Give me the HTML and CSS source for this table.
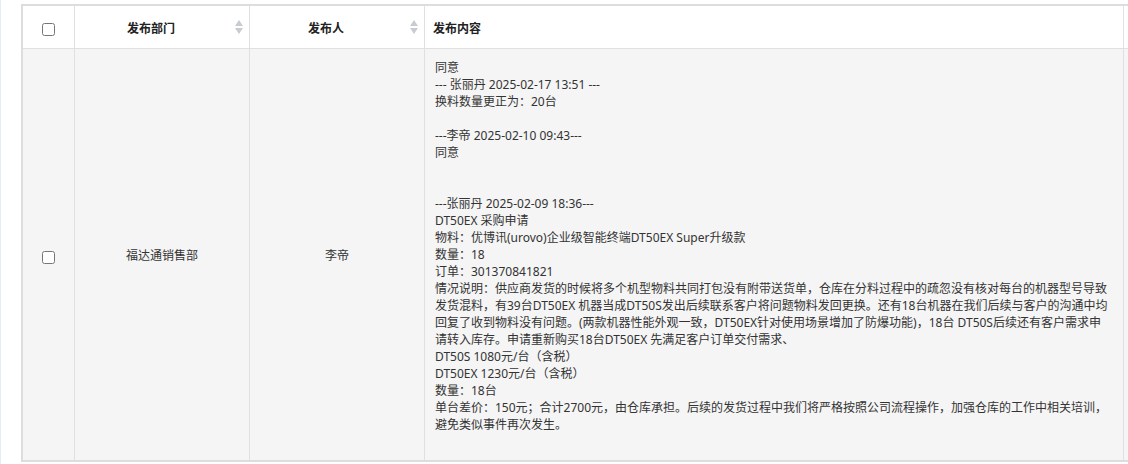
FILE: index.html
```html
<!DOCTYPE html>
<html>

<head>
    <meta charset="utf-8">
    <title>发布记录</title>
    <link rel="stylesheet" href="styles.css">
</head>

<body>
    <div id="page">
        <table class="grid">
            <thead>
                <tr>
                    <th class="col-check"><input type="checkbox"></th>
                    <th class="col-dept sortable">发布部门<span class="sort"><svg width="8" height="14" viewBox="0 0 8 14"><path d="M4 0L8 6H0Z" /><path d="M0 8H8L4 14Z" /></svg></span></th>
                    <th class="col-user sortable">发布人<span class="sort"><svg width="8" height="14" viewBox="0 0 8 14"><path d="M4 0L8 6H0Z" /><path d="M0 8H8L4 14Z" /></svg></span></th>
                    <th class="col-content">发布内容</th>
                    <th class="col-more"></th>
                </tr>
            </thead>
            <tbody>
                <tr>
                    <td class="col-check"><input type="checkbox"></td>
                    <td class="center">福达通销售部</td>
                    <td class="center">李帝</td>
                    <td class="content"><div class="text">同意
--- 张丽丹 2025-02-17 13:51 ---
换料数量更正为：20台

---李帝 2025-02-10 09:43---
同意


---张丽丹 2025-02-09 18:36---
DT50EX 采购申请
物料：优博讯(urovo)企业级智能终端DT50EX Super升级款
数量：18
订单：301370841821
情况说明：供应商发货的时候将多个机型物料共同打包没有附带送货单，仓库在分料过程中的疏忽没有核对每台的机器型号导致发货混料，有39台DT50EX 机器当成DT50S发出后续联系客户将问题物料发回更换。还有18台机器在我们后续与客户的沟通中均回复了收到物料没有问题。(两款机器性能外观一致，DT50EX针对使用场景增加了防爆功能)，18台 DT50S后续还有客户需求申<br>请转入库存。申请重新购买18台DT50EX 先满足客户订单交付需求、
DT50S 1080元/台（含税）
DT50EX 1230元/台（含税）
数量：18台
单台差价：150元；合计2700元，由仓库承担。后续的发货过程中我们将严格按照公司流程操作，加强仓库的工作中相关培训，避免类似事件再次发生。</div></td>
                    <td></td>
                </tr>
            </tbody>
        </table>
    </div>
</body>

</html>
```

FILE: styles.css
```css
html,
body {
    margin: 0;
    padding: 0;
    background: #fff;
}

body {
    font-family: "Noto Sans", "Noto Sans CJK SC", sans-serif;
    font-size: 12px;
    color: #333;
}

#page {
    height: 100vh;
    box-sizing: border-box;
    overflow: hidden;
    border-left: 1px solid #e6ecf5;
    padding: 4px 0 0 20px;
}

.grid {
    table-layout: fixed;
    border-collapse: separate;
    border-spacing: 0;
    width: 1303px;
    border-top: 2px solid #dddddd;
    border-left: 2px solid #dddddd;
    border-bottom: 2px solid #dddddd;
}

.grid th,
.grid td {
    box-sizing: border-box;
    border-right: 1px solid #e0e0e0;
    padding: 0;
}

.grid th {
    height: 43px;
    border-bottom: 1px solid #e0e0e0;
    background: #fff;
    font-family: "Noto Sans CJK SC", sans-serif;
    font-weight: bold;
    color: #222;
    text-align: center;
    position: relative;
}

.grid td {
    background: #f5f5f5;
    vertical-align: middle;
}

.grid input[type="checkbox"] {
    margin: 0;
    width: 13px;
    height: 13px;
    vertical-align: middle;
}

.col-check {
    width: 52px;
    text-align: center;
}

td.col-check {
    padding-top: 3px !important;
}

.col-dept,
.col-user {
    width: 175px;
}

.sortable {
    padding-right: 22px !important;
}

.sort {
    position: absolute;
    right: 6px;
    top: 14px;
    line-height: 0;
}

.sort svg {
    fill: #c8cbd0;
}

.col-content {
    width: 699px;
    text-align: left !important;
    padding-left: 8px !important;
}

.col-more {
    width: 200px;
}

.center {
    text-align: center;
}

.content {
    padding: 10px 10px 27px 10px !important;
    vertical-align: top !important;
}

.content .text {
    white-space: pre-line;
    line-height: 17px;
}
```
